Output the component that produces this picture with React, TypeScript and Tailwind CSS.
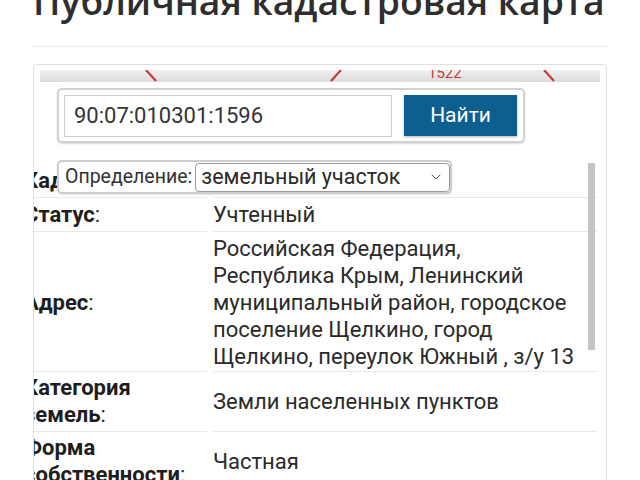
import { ChevronDown } from 'lucide-react';

const rows = [
  { label: ['Статус'], value: ['Учтенный'], pad: 'py-[3px]' },
  {
    label: ['Адрес'],
    value: [
      'Российская Федерация,',
      'Республика Крым, Ленинский',
      'муниципальный район, городское',
      'поселение Щелкино, город',
      'Щелкино, переулок Южный , з/у 13',
    ],
    pad: 'pt-[3px] pb-[1px]',
  },
  { label: ['Категория', 'земель'], value: ['Земли населенных пунктов'], pad: 'pt-[2px] pb-[3px]' },
  { label: ['Форма', 'собственности'], value: ['Частная'], pad: 'pt-[2px] pb-[3px]' },
];

const MapStrip = () => (
  <div className="relative mx-[6px] mt-[5px] h-[12px] overflow-hidden bg-gradient-to-b from-[#f0f0f0] to-[#dcdcdc]">
    <svg width="560" height="12" className="absolute left-0 top-0">
      <line x1="106" y1="0" x2="116" y2="11" stroke="#c43c3c" strokeWidth="2.2" />
      <line x1="301" y1="0" x2="291" y2="11" stroke="#c43c3c" strokeWidth="2.2" />
      <line x1="504" y1="0" x2="514" y2="11" stroke="#c43c3c" strokeWidth="2.2" />
    </svg>
    <span className="absolute left-[388px] top-[-6px] text-[15px] leading-[18px] text-[#c43c3c]">1522</span>
  </div>
);

const Row = ({ label, value, pad }: { label: string[]; value: string[]; pad: string }) => (
  <div className="flex">
    <div className={`w-[183px] shrink-0 flex flex-col justify-center border-b border-[#e8e8e8] ${pad}`}>
      {label.map((l, i) => (
        <div key={i} className="whitespace-nowrap leading-[27px]">
          <span className="font-bold text-[#1e1e1e]">{l}</span>
          {i === label.length - 1 && <span>:</span>}
        </div>
      ))}
    </div>
    <div className={`ml-[6px] flex-1 flex flex-col justify-center border-b border-[#e8e8e8] ${pad}`}>
      {value.map((v, i) => (
        <div key={i} className="whitespace-nowrap leading-[27px]">
          {v}
        </div>
      ))}
    </div>
  </div>
);

export default function App() {
  return (
    <div
      className="w-[640px] h-[480px] overflow-hidden bg-white text-[#2a2a2a]"
      style={{ fontFamily: 'Roboto, "Liberation Sans", sans-serif' }}
    >
      <div className="px-[33px]">
        <h1
          className="mt-[-23px] text-[37.3px] leading-[48px] font-semibold text-[#2e2e2e] whitespace-nowrap"
          style={{ fontFamily: '"Open Sans", sans-serif' }}
        >
          Публичная кадастровая карта
        </h1>
        <div className="mt-[21px] h-px bg-[#ececec]" />
      </div>

      <div className="mx-[33px] mt-[17px] h-[460px] rounded-[4px] border border-[#dedede]">
        <MapStrip />

        <div className="ml-[23px] mt-[6px] flex h-[55px] w-[468px] items-center rounded-[5px] border-2 border-[#d2d2d2] bg-white px-[5px] shadow-[0_1px_2px_rgba(0,0,0,0.15)]">
          <div className="flex h-[42px] w-[328px] items-center border border-[#cfcfcf] pl-[9px] text-[22px] text-[#333]">
            90:07:010301:1596
          </div>
          <button className="ml-[12px] h-[41px] w-[113px] bg-[#0c5f8f] text-[21px] text-white shadow-[0_1px_2px_rgba(0,0,0,0.3)]">
            Найти
          </button>
        </div>

        <div className="relative mr-[9px] overflow-hidden text-[22px]">
          <div className="ml-[-10px]">
            <Row label={['Кадастровый номер']} value={['']} pad="pt-[24px] pb-[3px]" />
            {rows.map((r, i) => (
              <Row key={i} label={r.label} value={r.value} pad={r.pad} />
            ))}
          </div>

          <div className="absolute left-[23px] top-[17px] flex h-[34px] w-[395px] items-center rounded-[5px] border-2 border-[#cdcdcd] bg-white pl-[6px] shadow-[0_1px_2px_rgba(0,0,0,0.12)]">
            <span className="text-[19.5px] text-[#333]">Определение:</span>
            <div className="ml-[3px] flex h-[29px] w-[256px] items-center justify-between rounded-[4px] border border-[#9a9a9a] pl-[5px] pr-[5px]">
              <span className="text-[21.5px] text-[#2a2a2a]">земельный участок</span>
              <ChevronDown size={16} strokeWidth={1.5} className="text-[#555]" />
            </div>
          </div>

          <div className="absolute left-[554px] top-[20px] h-[187px] w-[7px] bg-[#c4c4c4]" />
        </div>
      </div>
    </div>
  );
}
